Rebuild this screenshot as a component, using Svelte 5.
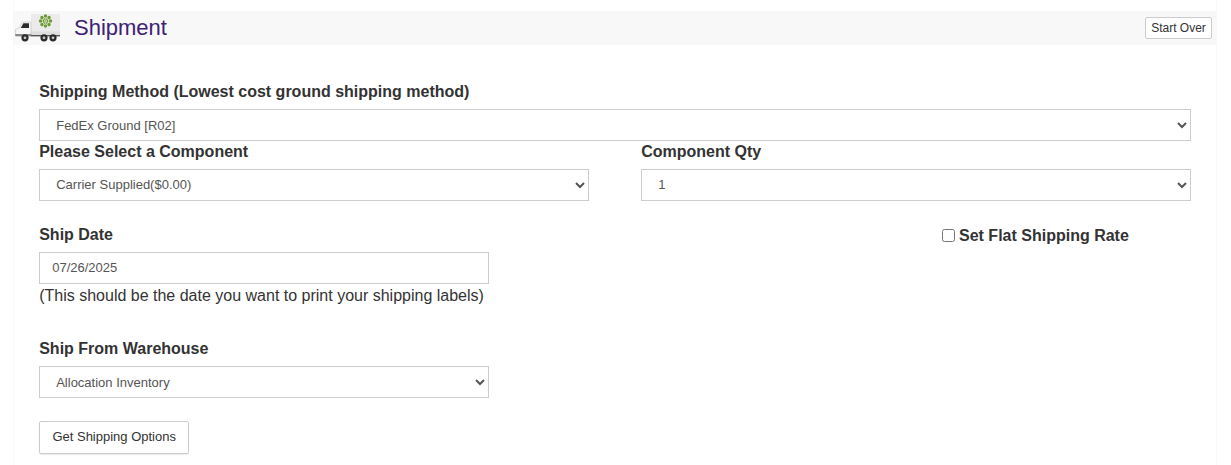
<script>
  const petals = [0, 45, 90, 135, 180, 225, 270, 315];
  const wheels = [10, 29, 38];
</script>

<div class="page">
  <header class="bar">
    <svg class="truck" viewBox="0 0 46 28" width="46" height="28" aria-hidden="true">
      <rect x="16" y="0" width="29" height="21" fill="#ebebeb" />
      <rect x="16" y="17.5" width="29" height="3.5" fill="#dedede" />
      <g transform="translate(30.5 7)" fill="#6c9a32">
        {#each petals as a}
          <circle cx="0" cy="-5" r="1.7" transform="rotate({a})" />
          <circle cx="0" cy="-2.2" r=".8" transform="rotate({a + 22})" />
        {/each}
        <circle r="1.1" fill="#9cbc68" />
      </g>
      <path d="M0.5 22 V15.5 L4 14 L7.5 8 H16 V22 Z" fill="#f6f6f6" stroke="#b0b0b0" stroke-width=".5" />
      <path d="M8.4 9.2 H14 V14 H5.8 Z" fill="#2a2a2a" />
      <rect x="0.3" y="20" width="16" height="2.2" fill="#8a8a8a" />
      <rect x="16" y="21" width="29" height="1.4" fill="#555" />
      {#each wheels as cx}
        <circle {cx} cy="23.8" r="3.6" fill="#2a2a2a" />
        <circle {cx} cy="23.8" r="1.4" fill="#c8c8c8" />
      {/each}
    </svg>
    <h1>Shipment</h1>
    <button class="start">Start Over</button>
  </header>

  <main class="body">
    <div class="field">
      <label for="method">Shipping Method (Lowest cost ground shipping method)</label>
      <select id="method"><option>FedEx Ground [R02]</option></select>
    </div>

    <div class="two">
      <div class="field">
        <label for="comp">Please Select a Component</label>
        <select id="comp"><option>Carrier Supplied($0.00)</option></select>
      </div>
      <div class="field">
        <label for="qty">Component Qty</label>
        <select id="qty"><option>1</option></select>
      </div>
    </div>

    <div class="date-row">
      <div class="field narrow">
        <label for="date">Ship Date</label>
        <input id="date" type="text" value="07/26/2025" />
        <p>(This should be the date you want to print your shipping labels)</p>
      </div>
      <label class="flat"><input type="checkbox" /> Set Flat Shipping Rate</label>
    </div>

    <div class="field narrow warehouse">
      <label for="wh">Ship From Warehouse</label>
      <select id="wh"><option>Allocation Inventory</option></select>
    </div>

    <button class="go">Get Shipping Options</button>
  </main>
</div>

<style>
  :global(body) {
    margin: 0;
    background: #fff;
    font-family: "Liberation Sans", Arial, sans-serif;
    color: #333;
  }
  .page {
    margin: 0 14px 0 13px;
    padding-top: 11px;
    height: 454px;
    overflow: hidden;
    border-right: 1px solid #f8f8f8;
    border-left: 1px solid #f8f8f8;
    box-sizing: content-box;
  }
  .bar {
    height: 34px;
    background: #f8f8f8;
    display: flex;
    align-items: center;
  }
  .truck {
    margin: 0 0 0 1px;
    flex: none;
  }
  h1 {
    margin: 0 0 0 13px;
    font-size: 22px;
    font-weight: 400;
    color: #3d2176;
    line-height: 34px;
  }
  .start {
    margin-left: auto;
    margin-right: 4px;
    height: 22px;
    width: 67px;
    padding: 0;
    font: 12px "Liberation Sans", Arial, sans-serif;
    color: #333;
    background: #fff;
    border: 1px solid #ccc;
    border-radius: 2px;
  }
  .body {
    padding: 38px 24.8px 0 25.2px;
  }
  .field {
    display: flex;
    flex-direction: column;
  }
  .field > label {
    font-size: 16px;
    font-weight: 700;
    line-height: 18px;
    color: #333;
    margin-bottom: 8px;
  }
  select, input[type="text"] {
    box-sizing: border-box;
    height: 32px;
    width: 100%;
    font: 13px "Liberation Sans", Arial, sans-serif;
    color: #555;
    background: #fff;
    border: 1px solid #ccc;
    border-radius: 0;
    padding: 0 12px;
  }
  .two {
    display: grid;
    grid-template-columns: 550px 550px;
    justify-content: space-between;
    margin-top: 1.6px;
  }
  .date-row {
    display: flex;
    justify-content: space-between;
    align-items: flex-start;
    margin-top: 25px;
  }
  .narrow { width: 450px; }
  .field p {
    margin: 2px 0 0;
    font-size: 16px;
    line-height: 20px;
    color: #333;
  }
  .flat {
    margin: 0 62.4px 0 0;
    font-size: 16px;
    font-weight: 700;
    line-height: 18px;
    display: flex;
    align-items: center;
    gap: 4px;
    padding-top: 1px;
  }
  .flat input {
    margin: 0;
    width: 13px;
    height: 13px;
  }
  .warehouse { margin-top: 34.6px; }
  .go {
    display: block;
    margin-top: 22.8px;
    width: 150px;
    height: 33px;
    padding: 0 0 2px;
    font: 13px "Liberation Sans", Arial, sans-serif;
    color: #333;
    background: #fff;
    border: 1px solid #ccc;
    border-radius: 2px;
    box-shadow: 0 1px 1px rgba(0, 0, 0, 0.08);
  }
</style>
